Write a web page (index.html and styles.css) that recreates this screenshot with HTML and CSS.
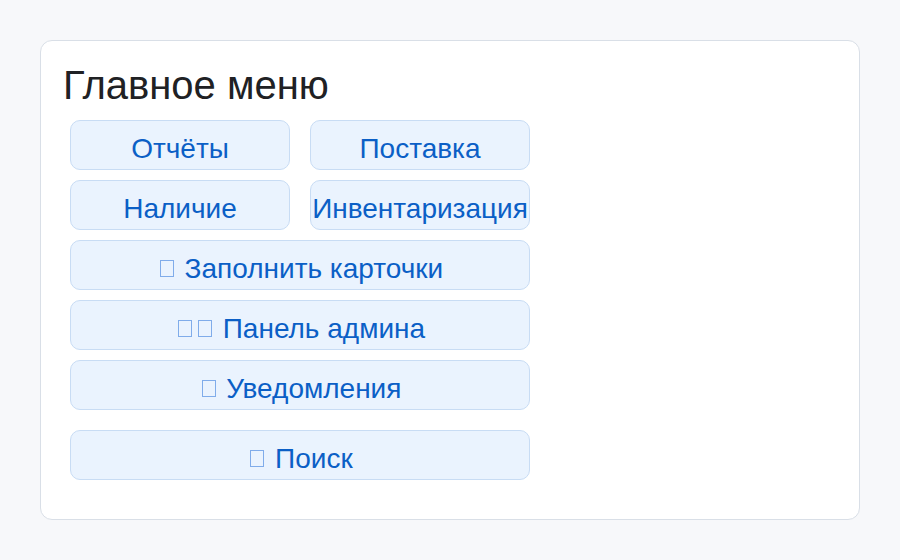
FILE: index.html
```html
<!DOCTYPE html>
<html lang="ru">
<head>
<meta charset="utf-8">
<title>Главное меню</title>
<link rel="stylesheet" href="styles.css">
</head>
<body>
<main class="card">
  <h1 class="title">Главное меню</h1>
  <div class="menu">
    <button class="btn">Отчёты</button>
    <button class="btn">Поставка</button>
    <button class="btn">Наличие</button>
    <button class="btn">Инвентаризация</button>
    <button class="btn wide"><span class="tofu"></span> Заполнить карточки</button>
    <button class="btn wide"><span class="tofu"></span><span class="tofu"></span> Панель админа</button>
    <button class="btn wide"><span class="tofu"></span> Уведомления</button>
    <button class="btn wide search"><span class="tofu"></span> Поиск</button>
  </div>
</main>
</body>
</html>
```
FILE: styles.css
```css
html, body {
  margin: 0;
  padding: 0;
  background: #f7f8fa;
  font-family: "Liberation Sans", Arial, sans-serif;
}
body {
  padding: 40px;
}
.card {
  box-sizing: border-box;
  width: 820px;
  height: 480px;
  background: #ffffff;
  border: 1px solid #d9dfe7;
  border-radius: 12px;
  padding: 21px 20px 0 22px;
}
.title {
  margin: 0;
  font-size: 40px;
  font-weight: normal;
  line-height: 46px;
  color: #202124;
}
.menu {
  display: grid;
  grid-template-columns: 220px 220px;
  column-gap: 20px;
  row-gap: 10px;
  margin: 12px 0 0 7px;
}
.btn {
  box-sizing: border-box;
  height: 50px;
  margin: 0;
  padding: 7px 0 0 0;
  background: #eaf3fe;
  border: 1px solid #c8dcf4;
  border-radius: 10px;
  color: #0b5fc6;
  font-family: "Liberation Sans", Arial, sans-serif;
  font-size: 28px;
  white-space: pre;
  overflow: visible;
  display: flex;
  align-items: center;
  justify-content: center;
}
.tofu {
  display: inline-block;
  box-sizing: border-box;
  width: 14px;
  height: 17px;
  margin: 0 3px;
  border: 1px solid #80acea;
  vertical-align: baseline;
}
.wide {
  grid-column: 1 / 3;
}
.search {
  margin-top: 10px;
}
```
